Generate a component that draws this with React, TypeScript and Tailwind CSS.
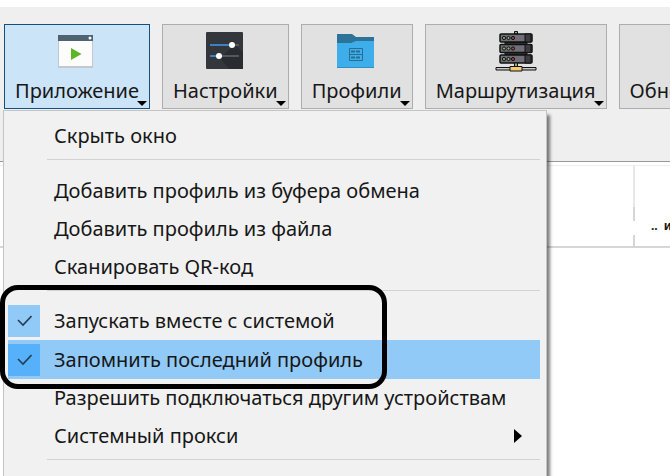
import { useState } from 'react';

const AppIcon = () => (
  <svg className="size-10" viewBox="0 0 40 40">
    <rect x="1" y="5" width="35" height="32" fill="#c3c9cb" />
    <rect x="2" y="5" width="33" height="30" fill="#fcfcfc" />
    <rect x="1" y="4" width="35" height="6" fill="#4d6470" />
    <circle cx="33" cy="7" r="1.5" fill="#fff" />
    <path d="M14 17L24.500 23L14 29Z" fill="#5cb524" />
  </svg>
);

const SettingsIcon = () => (
  <svg className="size-10" viewBox="0 0 40 40">
    <rect x="1" y="1" width="37" height="37" rx="1" fill="#33373c" />
    <path d="M30 14L38 21V38H24L15 27Z" fill="#292c30" />
    <path d="M5 14H34M5 25H34" stroke="#53585d" strokeWidth="2" />
    <path d="M5 14H27M5 25H14" stroke="#3a82c4" strokeWidth="2" />
    <circle cx="27" cy="14" r="3" fill="#fff" />
    <circle cx="14" cy="25" r="3" fill="#fff" />
  </svg>
);

const ProfilesIcon = () => (
  <svg className="size-10" viewBox="0 0 40 40">
    <path d="M0 3H15L19 6H37V20H0Z" fill="#2d7297" />
    <path d="M0 12H14L19 10H37V37H0Z" fill="#3daee9" />
    <path d="M0 36.500H37" stroke="#338fbe" />
    <g fill="none" stroke="#2a6d90">
      <path d="M12.500 17.500H25.500V29.500H12.500ZM12.500 23.500H25.500" />
      <path d="M14 20.500H24M14 26.500H24" strokeWidth="2" strokeDasharray="4 1" />
    </g>
  </svg>
);

const RoutingIcon = () => (
  <svg className="size-[42px]" viewBox="0 0 42 42" stroke="#111">
    <path d="M19.500 0.500H22.500V3H19.500Z" fill="#a8a77e" />
    <path d="M10 11H32V14H10ZM10 21H32V24H10Z" fill="#333" />
    {[3, 13.5, 24].map((y) => (
      <g key={y}>
        <rect x="5" y={y} width="32" height="8" rx="1" fill="#706f78" strokeWidth="1.5" />
        <path d={`M30 ${y}H36V${y + 8}H30Z`} fill="#3d3c43" />
        <circle cx="9" cy={y + 4} r="1.6" fill="#87ad72" />
        <circle cx="13.500" cy={y + 4} r="1.6" fill="#87ad72" />
        <circle cx="18" cy={y + 4} r="1.6" fill="#9b3f55" />
      </g>
    ))}
    <path d="M19.500 32H22.500V36H19.500Z" fill="#a8a77e" />
    <path d="M1 36.500H41V39H1Z" fill="#c8c8c8" />
    <path d="M15 35.500H27V40H15Z" fill="#f5ca70" />
  </svg>
);

const UpdateIcon = () => (
  <svg className="size-10" viewBox="0 0 40 40" fill="none" stroke="#efcfa8" strokeWidth="3">
    <path d="M34 20A14 14 0 1 1 30 10M31 3V11H23" />
  </svg>
);

const tools = [
  { label: 'Приложение', icon: <AppIcon />, open: true },
  { label: 'Настройки', icon: <SettingsIcon /> },
  { label: 'Профили', icon: <ProfilesIcon /> },
  { label: 'Маршрутизация', icon: <RoutingIcon /> },
  { label: 'Обновления', icon: <UpdateIcon /> },
];

const Separator = () => <hr className="mt-1 mb-3 ml-[39px] border-[#d2d2d2]" />;

const MenuItem = ({ label, submenu = false }: { label: string; submenu?: boolean }) => (
  <button role="menuitem" className="flex h-[38px] w-full items-center pr-[18px] pl-[46px] text-left hover:bg-[#91c9f7]">
    <span className="grow">{label}</span>
    {submenu && (
      <svg className="h-3.5 w-2" viewBox="0 0 8 14">
        <path d="M0 0L8 7L0 14Z" />
      </svg>
    )}
  </button>
);

type CheckItemProps = {
  label: string;
  checked: boolean;
  active?: boolean;
  onChange: () => void;
};

const CheckItem = ({ label, checked, active = false, onChange }: CheckItemProps) => (
  <label className={`flex h-[39px] items-center gap-3.5 ${active ? 'bg-[#91c9f7]' : ''}`}>
    <span className={`grid size-8 place-items-center ${active ? 'bg-[#56b0fa]' : 'bg-[#91c9f7]'}`}>
      <input type="checkbox" checked={checked} onChange={onChange} className="col-start-1 row-start-1 size-8 appearance-none" />
      {checked && (
        <svg className="pointer-events-none col-start-1 row-start-1 size-4" viewBox="0 0 16 16" fill="none" stroke="#223f57" strokeWidth="1.6">
          <path d="M2 7L7 12L15.500 3" />
        </svg>
      )}
    </span>
    {label}
  </label>
);

const App = () => {
  const [autostart, setAutostart] = useState(true);
  const [remember, setRemember] = useState(true);

  return (
    <div className="flex h-screen flex-col overflow-hidden bg-white pt-[7px] font-['Noto_Sans',sans-serif] text-xl leading-6 text-neutral-900">
      <header className="relative z-10 border-b border-[#999] bg-[#efefef] px-1 pt-[17px] pb-[52px]">
        <nav className="flex gap-3">
          {tools.map(({ label, icon, open }) => (
            <button
              key={label}
              className={`relative flex h-[85px] shrink-0 flex-col items-center border px-2.5 pt-1.5 ${
                open ? 'border-[#164f7c] bg-[#cce4f7]' : 'border-[#adadad] bg-[#e1e1e1]'
              }`}
            >
              <span className="flex h-12 items-start">{icon}</span>
              {label}
              <svg className="absolute right-0.5 bottom-0.5 h-[5px] w-2.5" viewBox="0 0 10 5">
                <path d="M0 0H10L5 5Z" />
              </svg>
            </button>
          ))}
        </nav>

        <div role="menu" className="absolute top-[103px] left-[3px] w-[544px] border border-[#c4c4c4] bg-[#f1f1f1] pt-1.5 pr-1.5 pb-10 pl-1 shadow-[3px_5px_3px_rgba(0,0,0,0.5)]">
          <MenuItem label="Скрыть окно" />
          <Separator />
          <MenuItem label="Добавить профиль из буфера обмена" />
          <MenuItem label="Добавить профиль из файла" />
          <MenuItem label="Сканировать QR-код" />
          <Separator />
          <div className="relative -mt-0.5">
            <CheckItem label="Запускать вместе с системой" checked={autostart} onChange={() => setAutostart(!autostart)} />
            <CheckItem label="Запомнить последний профиль" checked={remember} active onChange={() => setRemember(!remember)} />
            <div className="pointer-events-none absolute -top-4 -bottom-2.5 -left-2 w-[387px] rounded-[18px] border-5 border-black" />
          </div>
          <MenuItem label="Разрешить подключаться другим устройствам" />
          <MenuItem label="Системный прокси" submenu />
          <Separator />
        </div>
      </header>

      <section className="flex h-[86px] shrink-0 border-b-2 border-[#d6d6d6] pt-[3px]">
        <div className="w-[633px] shrink-0 border-t border-[#eee]" />
        <div className="flex grow border-t border-[#eee]">
          <div className="flex w-0.5 flex-col">
            <div className="h-[41px] bg-[#e8e8e8]" />
            <div className="h-3.5 bg-[#d6d6d6]" />
            <div className="mt-3.5 grow bg-[#d6d6d6]" />
          </div>
          <div className="mt-14 ml-4 flex h-2 gap-1.5 overflow-hidden text-xs leading-2 font-bold">
            <span>..</span>
            <span>и</span>
          </div>
        </div>
      </section>
    </div>
  );
};

export default App;
